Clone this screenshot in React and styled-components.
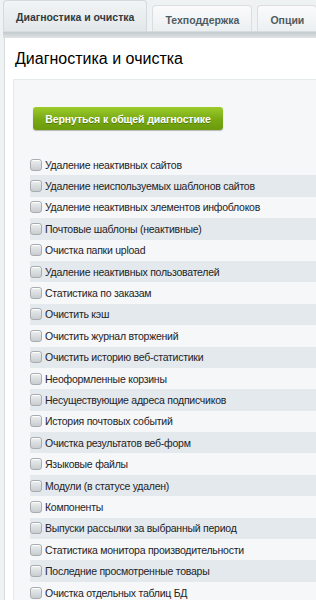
import React from "react";
import styled, { createGlobalStyle } from "styled-components";

const GlobalStyle = createGlobalStyle`
  html, body {
    margin: 0;
    padding: 0;
    background: #eef2f3;
    font-family: "Liberation Sans", Arial, sans-serif;
    overflow: hidden;
  }
`;

const Page = styled.div`
  width: 316px;
  height: 600px;
  padding-left: 3px;
  box-sizing: border-box;
  overflow: hidden;
`;

const TabBar = styled.div`
  display: flex;
  align-items: flex-end;
  gap: 5px;
  height: 31px;
`;

const Tab = styled.div`
  box-sizing: border-box;
  height: ${p => (p.active ? "31px" : "26px")};
  padding: ${p => (p.active ? "2px 12px 0" : "3px 12px 0")};
  display: flex;
  align-items: center;
  font-size: 10.5px;
  font-weight: bold;
  white-space: nowrap;
  color: ${p => (p.active ? "#2e3a42" : "#4f5b63")};
  border: 1px solid ${p => (p.active ? "#d3d9dc" : "#d9dee1")};
  border-bottom: 0;
  border-radius: 4px 4px 0 0;
  background: ${p =>
    p.active
      ? "linear-gradient(#f2f4f5, #e2e7e9)"
      : "linear-gradient(#fbfbfc, #eceff0)"};
`;

const TabLine = styled.div`
  height: 6px;
  background: linear-gradient(#c3cacd, #dfe3e5);
  border-top: 1px solid #d5dbde;
`;

const Content = styled.div`
  background: #fff;
  border-left: 1px solid #d7dcdf;
  margin-left: 1px;
  padding: 11px 0 0 8px;
  height: 100%;
`;

const Title = styled.h1`
  margin: 0 0 10px 2px;
  font-weight: normal;
  font-size: 16px;
  line-height: 20px;
  color: #000;
`;

const Panel = styled.div`
  background: #f5f7f8;
  border-top: 1px solid #e4e9eb;
  border-left: 1px solid #e4e9eb;
  padding: 27px 0 0 16px;
  height: 100%;
`;

const BackButton = styled.button`
  margin-left: 3px;
  width: 190px;
  height: 23px;
  border: 0;
  border-radius: 3px;
  background: linear-gradient(#9ccb2a, #78a914 55%, #6b9a0c);
  box-shadow: 0 1px 1px rgba(0, 0, 0, 0.25);
  color: #fff;
  font-family: inherit;
  font-size: 10.5px;
  letter-spacing: -0.1px;
  font-weight: bold;
  text-shadow: 0 1px 0 rgba(60, 90, 0, 0.6);
  cursor: pointer;
`;

const List = styled.div`
  margin-top: 24px;
  display: flex;
  flex-direction: column;
`;

const Row = styled.label`
  display: flex;
  align-items: center;
  gap: 3px;
  height: 21.4px;
  background: ${p => (p.alt ? "#e3e9ec" : "transparent")};
  font-size: 10.5px;
  letter-spacing: -0.25px;
  color: #1d2328;
  white-space: nowrap;
`;

const Box = styled.span`
  width: 10px;
  height: 10px;
  flex: none;
  border: 1px solid #a6acb0;
  border-radius: 3px;
  background: linear-gradient(#eceeef, #c9cdd0);
  box-shadow: inset 0 1px 0 #fff;
`;

const items = [
  "Удаление неактивных сайтов",
  "Удаление неиспользуемых шаблонов сайтов",
  "Удаление неактивных элементов инфоблоков",
  "Почтовые шаблоны (неактивные)",
  "Очистка папки upload",
  "Удаление неактивных пользователей",
  "Статистика по заказам",
  "Очистить кэш",
  "Очистить журнал вторжений",
  "Очистить историю веб-статистики",
  "Неоформленные корзины",
  "Несуществующие адреса подписчиков",
  "История почтовых событий",
  "Очистка результатов веб-форм",
  "Языковые файлы",
  "Модули (в статусе удален)",
  "Компоненты",
  "Выпуски рассылки за выбранный период",
  "Статистика монитора производительности",
  "Последние просмотренные товары",
  "Очистка отдельных таблиц БД",
];

export default function App() {
  return (
    <Page>
      <GlobalStyle />
      <TabBar>
        <Tab active>Диагностика и очистка</Tab>
        <Tab>Техподдержка</Tab>
        <Tab>Опции</Tab>
      </TabBar>
      <TabLine />
      <Content>
        <Title>Диагностика и очистка</Title>
        <Panel>
          <BackButton>Вернуться к общей диагностике</BackButton>
          <List>
            {items.map((t, i) => (
              <Row key={t} alt={i % 2 === 1}>
                <Box />
                {t}
              </Row>
            ))}
          </List>
        </Panel>
      </Content>
    </Page>
  );
}
